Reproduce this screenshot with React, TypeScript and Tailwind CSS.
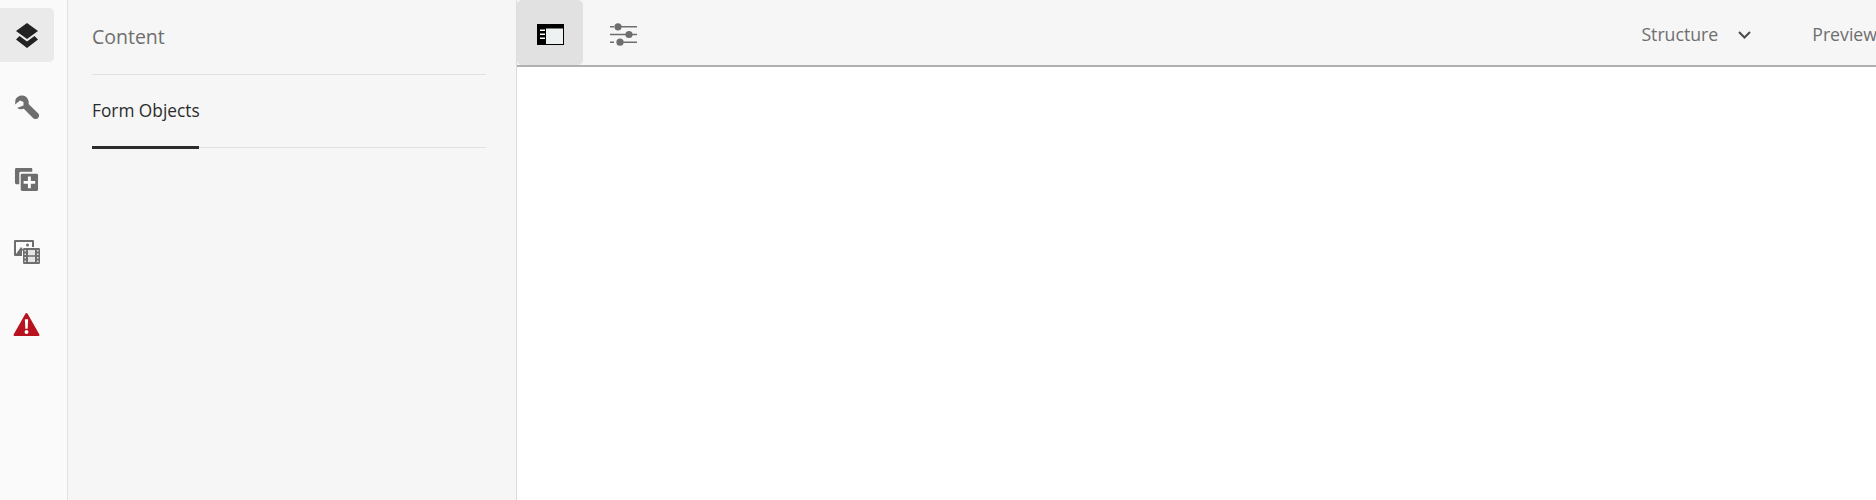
import React from 'react';

const railItem = 'flex h-[54px] w-[54px] items-center justify-center rounded-r-[5px]';

function LayersIcon() {
  return (
    <svg width="24" height="25" viewBox="0 0 24 25">
      <path d="M12 0 L23 8 L12 16 L1 8 Z" fill="#222" />
      <path d="M4.500 13 L12 18.500 L19.500 13 L23 16.500 L12 25 L1 16.500 Z" fill="#222" />
    </svg>
  );
}

function WrenchIcon() {
  return (
    <svg width="24" height="24" viewBox="0 0 24 24">
      <path
        d="M7.500 0.500 C4.500 0.200 1.500 2 0.500 4.500 L0 9.500 L5 5.500 L8.500 7 L8.500 10.500 L2 13 C4.500 14.500 7 14.500 8.800 13.800 L18 23 C19.400 24.400 21.800 24.400 23 23 C24.400 21.700 24.400 19.500 23 18.200 L13.600 9 C14.400 5.500 12 1 7.500 0.500 Z"
        fill="#6e6e6e"
      />
    </svg>
  );
}

function AddPageIcon() {
  return (
    <svg width="25" height="25" viewBox="0 0 26 26">
      <path d="M1 2.500 Q1 1 2.500 1 H18 Q19 1 19 2 V5 H7 Q5.500 5 5.500 6.500 V18 H2.500 Q1 18 1 16.500 Z" fill="#6e6e6e" />
      <rect x="7" y="7" width="18" height="18" rx="1.500" fill="#6e6e6e" />
      <path d="M14.500 10 H17.500 V14.500 H22 V17.500 H17.500 V22 H14.500 V17.500 H10 V14.500 H14.500 Z" fill="#fff" />
    </svg>
  );
}

function AssetsIcon() {
  return (
    <svg width="26" height="24" viewBox="0 0 26 24">
      <path d="M0 1 Q0 0 1 0 H19 Q20 0 20 1 V7 H18 V2 H2 V14 L7 7 L10 10.500 H8 V16 H1 Q0 16 0 15 Z" fill="#6e6e6e" />
      <circle cx="13.500" cy="5" r="1.500" fill="#6e6e6e" />
      <rect x="9" y="8" width="17" height="16" rx="1.200" fill="#6e6e6e" />
      <path d="M14 10 H21 V15.200 H14 Z M14 16.800 H21 V22 H14 Z" fill="#e4e4e4" />
      <path d="M10.500 10 H12 V11.500 H10.500 Z M10.500 13.500 H12 V15 H10.500 Z M10.500 17 H12 V18.500 H10.500 Z M10.500 20.500 H12 V22 H10.500 Z M23 10 H24.500 V11.500 H23 Z M23 13.500 H24.500 V15 H23 Z M23 17 H24.500 V18.500 H23 Z M23 20.500 H24.500 V22 H23 Z" fill="#e4e4e4" />
    </svg>
  );
}

function AlertIcon() {
  return (
    <svg width="27" height="25" viewBox="0 0 28 26">
      <path d="M14 1 Q14.800 1 15.300 2 L27.400 23.500 Q28 25 26.500 25 H1.500 Q0 25 .600 23.500 L12.700 2 Q13.200 1 14 1 Z" fill="#b9121f" />
      <path d="M12.300 7.500 H15.700 L15.200 17.500 H12.800 Z" fill="#fff" />
      <circle cx="14" cy="20.800" r="2" fill="#fff" />
    </svg>
  );
}

function PanelIcon() {
  return (
    <svg width="27" height="21" viewBox="0 0 27 21">
      <rect x="0" y="0" width="27" height="21" fill="#000" />
      <rect x="9" y="4.500" width="17" height="15.500" fill="#eef1f2" />
      <path d="M3 5.500 H8 V7 H3 Z M3 9.500 H8 V11 H3 Z M3 13.500 H8 V15 H3 Z" fill="#fff" />
    </svg>
  );
}

function SlidersIcon() {
  return (
    <svg width="27" height="23" viewBox="0 0 27 23" fill="#6e6e6e">
      <path d="M0 3 H4 V4.500 H0 Z M11 3 H27 V4.500 H11 Z M0 10.800 H17 V12.300 H0 Z M22 10.800 H27 V12.300 H22 Z M0 18.500 H4 V20 H0 Z M13 18.500 H27 V20 H13 Z" />
      <circle cx="8" cy="3.800" r="3.600" />
      <circle cx="19" cy="11.500" r="3.600" />
      <circle cx="10" cy="19.200" r="3.600" />
    </svg>
  );
}

function ChevronIcon() {
  return (
    <svg width="13" height="8" viewBox="0 0 13 8" fill="none" stroke="#4b4b4b" strokeWidth="2">
      <path d="M1 1 L6.500 6.500 L12 1" />
    </svg>
  );
}

export default function App() {
  return (
    <div className="flex h-[500px] w-[1876px] overflow-hidden bg-white font-['Open_Sans',sans-serif]">
      {/* left rail */}
      <div className="flex w-[68px] shrink-0 flex-col gap-[18.250px] border-r border-[#e1e1e1] bg-[#fafafa] pt-2">
        <div className={`${railItem} bg-[#eaeaea]`}>
          <LayersIcon />
        </div>
        <div className={railItem}>
          <WrenchIcon />
        </div>
        <div className={`${railItem} pr-[2px]`}>
          <AddPageIcon />
        </div>
        <div className={railItem}>
          <AssetsIcon />
        </div>
        <div className={`${railItem} pr-[2px]`}>
          <AlertIcon />
        </div>
      </div>

      {/* side panel */}
      <div className="w-[449px] shrink-0 border-r border-[#dcdcdc] bg-[#f6f6f6] pl-[24px] pr-[30px]">
        <div className="flex h-[75px] items-center border-b border-[#e1e1e1] text-[19.500px] text-[#6e6e6e]">
          <span>Content</span>
        </div>
        <div className="flex h-[73px] border-b border-[#e1e1e1]">
          <div className="flex h-[74px] w-[107px] items-center whitespace-nowrap border-b-[3px] border-[#2c2c2c] text-[17.300px] text-[#2c2c2c]">
            Form Objects
          </div>
        </div>
      </div>

      {/* main area */}
      <div className="min-w-0 flex-1">
        <div className="flex h-[67px] items-center justify-between border-b-2 border-[#b0b0b0] bg-[#f6f6f6]">
          <div className="flex items-center">
            <div className="flex h-[65px] w-[66px] items-center justify-center rounded-[5px] bg-[#e1e1e1] pt-[3px]">
              <PanelIcon />
            </div>
            <div className="ml-[13px] flex h-[65px] w-[55px] items-center justify-center pt-[3px]">
              <SlidersIcon />
            </div>
          </div>
          <div className="flex items-center whitespace-nowrap pt-[4px] text-[17.700px] text-[#6e6e6e]">
            <span>Structure</span>
            <span className="ml-[20px] mr-[61px] pt-[1px]">
              <ChevronIcon />
            </span>
            <span className="mr-[-1px]">Preview</span>
          </div>
        </div>
      </div>
    </div>
  );
}
